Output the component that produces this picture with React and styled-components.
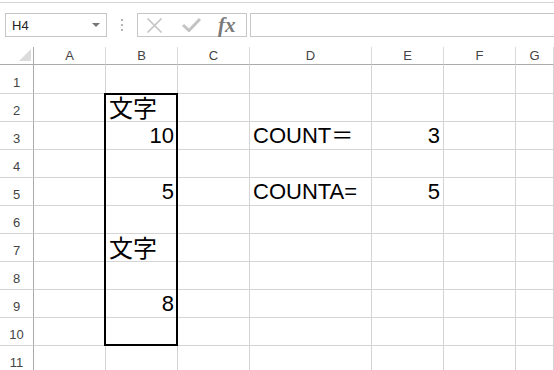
import React from 'react';
import styled, { createGlobalStyle } from 'styled-components';

//////////////////////////////////////////////////

const GlobalStyle = createGlobalStyle`
  html, body {
    margin: 0;
    padding: 0;
    background: #fff;
    overflow: hidden;
  }
  body {
    width: 554px;
    height: 370px;
    font-family: "Liberation Sans", Arial, sans-serif;
  }
`;

const columns = ['A', 'B', 'C', 'D', 'E', 'F', 'G'];
const rows = [1, 2, 3, 4, 5, 6, 7, 8, 9, 10, 11];

// cell values keyed by address
const cells = {
  B2: { text: '文字', align: 'left', cjk: true },
  B3: { text: '10', align: 'right' },
  B5: { text: '5', align: 'right' },
  B7: { text: '文字', align: 'left', cjk: true },
  B9: { text: '8', align: 'right' },
  D3: { text: 'COUNT＝', align: 'left' },
  E3: { text: '3', align: 'right' },
  D5: { text: 'COUNTA=', align: 'left' },
  E5: { text: '5', align: 'right' }
};

//////////////////////////////////////////////////

const App = () => {
  return (
    <Page>
      <GlobalStyle />
      <TopRule />
      <FormulaBar>
        <NameBox>
          <NameText>H4</NameText>
          <DropArrow />
        </NameBox>
        <Grip>
          <Dot />
          <Dot />
          <Dot />
        </Grip>
        <FxBox>
          <IconSlot>
            <svg width='17' height='17' viewBox='0 0 17 17'>
              <path d='M1.5 1.5 L15.5 15.5 M15.5 1.5 L1.5 15.5' stroke='#c3c3c3' strokeWidth='1.6' fill='none' />
            </svg>
          </IconSlot>
          <IconSlot>
            <svg width='19' height='14' viewBox='0 0 19 14'>
              <path d='M1 7 L7 12.5 L18 1' stroke='#c3c3c3' strokeWidth='3' fill='none' />
            </svg>
          </IconSlot>
          <FxLabel>fx</FxLabel>
        </FxBox>
        <FormulaInput />
      </FormulaBar>

      <Sheet>
        <Corner>
          <CornerMark />
        </Corner>
        {columns.map((col, ci) => (
          <ColHead key={col} $c={ci + 2}>{col}</ColHead>
        ))}
        {rows.map((row, ri) => (
          <React.Fragment key={row}>
            <RowHead $r={ri + 2}>{row}</RowHead>
            {columns.map((col, ci) => {
              const cell = cells[col + row];
              return (
                <Cell
                  key={col + row}
                  $r={ri + 2}
                  $c={ci + 2}
                  $align={cell ? cell.align : 'left'}
                  $cjk={cell && cell.cjk}
                >
                  {cell ? cell.text : ''}
                </Cell>
              );
            })}
          </React.Fragment>
        ))}
        <RangeBox />
      </Sheet>
    </Page>
  );
};

//////////////////////////////////////////////////

const Page = styled.div`
  width: 554px;
  height: 370px;
  overflow: hidden;
  background: #fff;
`;

const TopRule = styled.div`
  height: 1px;
  margin-top: 2px;
  background: #d4d4d4;
`;

const FormulaBar = styled.div`
  display: flex;
  align-items: center;
  height: 24px;
  margin-top: 10px;
  padding-left: 5px;
`;

const NameBox = styled.div`
  box-sizing: border-box;
  width: 102px;
  height: 24px;
  border: 1px solid #c6c6c6;
  display: flex;
  align-items: center;
  justify-content: space-between;
  padding: 0 6px 0 6px;
`;

const NameText = styled.span`
  font-size: 13px;
  color: #222;
`;

const DropArrow = styled.span`
  width: 0;
  height: 0;
  border-left: 4px solid transparent;
  border-right: 4px solid transparent;
  border-top: 4px solid #777;
`;

const Grip = styled.div`
  width: 30px;
  display: flex;
  flex-direction: column;
  align-items: center;
  gap: 3px;
`;

const Dot = styled.span`
  width: 2px;
  height: 2px;
  background: #b4b4b4;
`;

const FxBox = styled.div`
  box-sizing: border-box;
  width: 110px;
  height: 24px;
  border: 1px solid #c6c6c6;
  display: flex;
  align-items: center;
  padding-left: 8px;
  gap: 19px;
`;

const IconSlot = styled.span`
  display: flex;
  align-items: center;
`;

const FxLabel = styled.span`
  font-family: "Liberation Serif", "DejaVu Serif", serif;
  font-style: italic;
  font-weight: bold;
  font-size: 21px;
  color: #7a7a7a;
  margin-left: -2px;
`;

const FormulaInput = styled.div`
  flex: 1;
  height: 24px;
  box-sizing: border-box;
  margin-left: 3px;
  border: 1px solid #c6c6c6;
  border-right: none;
`;

const Sheet = styled.div`
  display: grid;
  grid-template-columns: 34px 72px 72px 72px 122px 72px 72px 1fr;
  grid-template-rows: 18px 29px repeat(10, 28px);
  margin-top: 10px;
`;

const Corner = styled.div`
  grid-row: 1;
  grid-column: 1;
  box-sizing: border-box;
  border-bottom: 1px solid #ababab;
  border-right: 1px solid #ababab;
  display: flex;
  align-items: flex-end;
  justify-content: flex-end;
  padding: 0 2px 3px 0;
`;

const CornerMark = styled.span`
  width: 0;
  height: 0;
  border-left: 12px solid transparent;
  border-bottom: 12px solid #dcdcdc;
`;

const ColHead = styled.div`
  grid-row: 1;
  grid-column: ${p => p.$c};
  box-sizing: border-box;
  border-bottom: 1px solid #ababab;
  border-right: 1px solid #dadada;
  font-size: 13px;
  color: #444;
  display: flex;
  align-items: center;
  justify-content: center;
`;

const RowHead = styled.div`
  grid-row: ${p => p.$r};
  grid-column: 1;
  box-sizing: border-box;
  border-right: 1px solid #ababab;
  border-bottom: 1px solid #d4d4d4;
  font-size: 13px;
  color: #444;
  display: flex;
  align-items: flex-end;
  justify-content: center;
  padding-bottom: 3px;
`;

const Cell = styled.div`
  grid-row: ${p => p.$r};
  grid-column: ${p => p.$c};
  box-sizing: border-box;
  border-right: 1px solid #d4d4d4;
  border-bottom: 1px solid #d4d4d4;
  font-family: "Liberation Sans", "Noto Sans CJK JP", Arial, sans-serif;
  font-size: ${p => (p.$cjk ? '24px' : '22px')};
  line-height: 22px;
  color: #000;
  display: flex;
  align-items: flex-end;
  justify-content: ${p => (p.$align === 'right' ? 'flex-end' : 'flex-start')};
  padding: 0 3px ${p => (p.$cjk ? '1px' : '2px')} 3px;
  white-space: nowrap;
`;

const RangeBox = styled.div`
  grid-column: 3;
  grid-row: 3 / 12;
  box-sizing: border-box;
  margin: -1px 0 0 -2px;
  border: 2px solid #000;
  pointer-events: none;
`;

//////////////////////////////////////////////////

export default App;
